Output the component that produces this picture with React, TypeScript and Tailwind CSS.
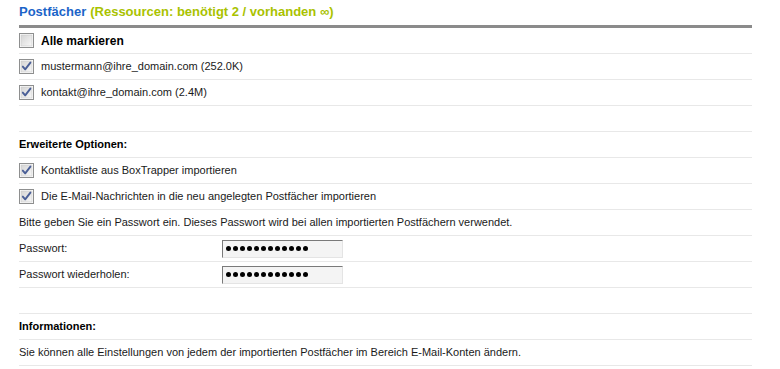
import React from "react";

const font = { fontFamily: '"Liberation Sans", Arial, sans-serif' };

function Check({ checked }: { checked?: boolean }) {
  return (
    <svg width="15" height="15" viewBox="0 0 15 15" className="shrink-0">
      <defs>
        <linearGradient id="cbg" x1="0" y1="0" x2="1" y2="1">
          <stop offset="0" stopColor="#d4d4d4" />
          <stop offset="1" stopColor="#f8f8f8" />
        </linearGradient>
      </defs>
      <rect x="0.5" y="0.5" width="14" height="14" fill="#fff" stroke="#8e8f8f" />
      <rect x="2" y="2" width="11" height="11" fill="url(#cbg)" stroke="#c8c8c8" strokeWidth="0.6" />
      {checked && (
        <path d="M3.8 7.6 L6.2 10.4 L11.4 3.6" fill="none" stroke="#4a5f97" strokeWidth="1.9" strokeLinecap="round" strokeLinejoin="round" />
      )}
    </svg>
  );
}

function Row({ children, className = "" }: { children?: React.ReactNode; className?: string }) {
  return (
    <div className={`h-[26px] border-b border-[#e8e8e8] flex items-center ${className}`}>{children}</div>
  );
}

function CheckRow({ label, checked, bold }: { label: string; checked?: boolean; bold?: boolean }) {
  return (
    <Row>
      <Check checked={checked} />
      <span className={`ml-[7px] ${bold ? "font-bold text-[12px] text-black" : ""}`}>{label}</span>
    </Row>
  );
}

function PwField() {
  return (
    <div className="w-[121px] h-[18px] bg-[#f4f4f4] border border-[#e4e4e4] border-t-[#7a7a7a] border-l-[#7a7a7a] flex items-center pl-[3px] gap-[2px]">
      {Array.from({ length: 12 }).map((_, i) => (
        <span key={i} className="w-[5px] h-[5px] rounded-full bg-black" />
      ))}
    </div>
  );
}

export default function App() {
  return (
    <div className="w-[780px] h-[369px] bg-white overflow-hidden text-[11px] text-[#1a1a1a]" style={font}>
      <div className="ml-[19px] w-[733px]">
        <div className="h-[28px] border-b-[3px] border-[#8b8b8b] flex items-center pb-[2px]">
          <span className="text-[13px] font-bold text-[#1b64c8]">Postfächer</span>
          <span className="text-[13px] font-bold text-[#a9c200] ml-[4px]">(Ressourcen: benötigt 2 / vorhanden ∞)</span>
        </div>
        <CheckRow label="Alle markieren" bold />
        <CheckRow label="mustermann@ihre_domain.com (252.0K)" checked />
        <CheckRow label="kontakt@ihre_domain.com (2.4M)" checked />
        <Row />
        <Row>
          <span className="font-bold text-black">Erweiterte Optionen:</span>
        </Row>
        <CheckRow label="Kontaktliste aus BoxTrapper importieren" checked />
        <CheckRow label="Die E-Mail-Nachrichten in die neu angelegten Postfächer importieren" checked />
        <Row>
          <span>Bitte geben Sie ein Passwort ein. Dieses Passwort wird bei allen importierten Postfächern verwendet.</span>
        </Row>
        <Row>
          <span className="w-[203px]">Passwort:</span>
          <PwField />
        </Row>
        <Row>
          <span className="w-[203px]">Passwort wiederholen:</span>
          <PwField />
        </Row>
        <Row />
        <Row>
          <span className="font-bold text-black">Informationen:</span>
        </Row>
        <Row>
          <span>Sie können alle Einstellungen von jedem der importierten Postfächer im Bereich E-Mail-Konten ändern.</span>
        </Row>
      </div>
    </div>
  );
}
